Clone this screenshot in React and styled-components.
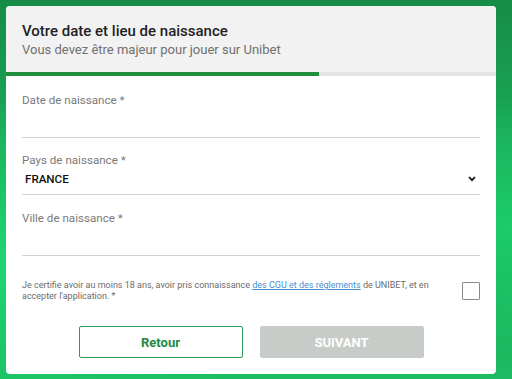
import styled, { createGlobalStyle } from 'styled-components'

const GlobalStyle = createGlobalStyle`
  html, body {
    margin: 0;
    padding: 0;
  }
  body {
    width: 512px;
    height: 379px;
    overflow: hidden;
    font-family: Roboto, "Liberation Sans", sans-serif;
    background:
      radial-gradient(ellipse at 0% 70%, #1fd672 0%, rgba(31, 214, 114, 0) 45%),
      radial-gradient(ellipse at 100% 60%, #1ccb6b 0%, rgba(28, 203, 107, 0) 40%),
      linear-gradient(180deg, #168c47 0%, #1aa857 35%, #1cbb62 100%);
  }
`

const Page = styled.div`
  padding: 6px 16px 0 6px;
`

const Card = styled.div`
  width: 490px;
  height: 368px;
  background: #ffffff;
  border-radius: 4px;
  overflow: hidden;
  display: flex;
  flex-direction: column;
`

const Header = styled.div`
  height: 66px;
  box-sizing: border-box;
  background: #f2f2f2;
  padding: 16px 16px 0 16px;
`

const Title = styled.div`
  font-size: 15px;
  font-weight: 500;
  line-height: 19px;
  color: #222222;
`

const Subtitle = styled.div`
  font-size: 13px;
  line-height: 16px;
  color: #707070;
  margin-top: 1px;
`

const Progress = styled.div`
  height: 4px;
  background: #e4e4e4;
`

const ProgressFill = styled.div`
  height: 100%;
  background: #1e8f3c;
`

const Body = styled.div`
  padding: 0 16px;
  display: flex;
  flex-direction: column;
`

const Field = styled.div`
  padding-top: ${({ $top }) => $top}px;
  border-bottom: 1px solid #cfd3d7;
`

const Label = styled.div`
  font-size: 11.6px;
  line-height: 14px;
  color: #7a7a7a;
`

const EmptyInput = styled.div`
  height: 30px;
`

const SelectRow = styled.div`
  display: flex;
  align-items: center;
  justify-content: space-between;
  height: 16px;
  margin-top: 4px;
  padding: 0 4px 7px 3px;
`

const SelectValue = styled.span`
  font-size: 11.6px;
  font-weight: 500;
  color: #111111;
`

const Legal = styled.div`
  display: flex;
  align-items: flex-start;
  justify-content: space-between;
  margin-top: 24px;
`

const LegalText = styled.p`
  margin: 0;
  width: 420px;
  font-size: 9px;
  line-height: 11px;
  color: #6b6b6b;

  a {
    color: #4a8fd4;
    text-decoration: underline;
  }
`

const Checkbox = styled.span`
  width: 16px;
  height: 16px;
  margin-top: 2px;
  border: 1px solid #8a8a8a;
  border-radius: 1px;
  background: #fff;
`

const Actions = styled.div`
  display: flex;
  justify-content: center;
  gap: 17px;
  margin-top: 24px;
`

const Button = styled.button`
  width: 164px;
  height: 32px;
  box-sizing: border-box;
  border-radius: 2px;
  font-family: Roboto, "Liberation Sans", sans-serif;
  font-size: 13px;
  font-weight: 700;
  cursor: pointer;
  border: 1px solid ${({ $primary }) => ($primary ? '#c8ccc9' : '#2e9a55')};
  background: ${({ $primary }) => ($primary ? '#c8ccc9' : '#ffffff')};
  color: ${({ $primary }) => ($primary ? '#ffffff' : '#1f8a45')};
`

const Chevron = () => (
  <svg width="8" height="6" viewBox="0 0 8 6">
    <path d="M1 1 L4 4.2 L7 1" fill="none" stroke="#111" strokeWidth="1.8" />
  </svg>
)

export default function App() {
  return (
    <>
      <GlobalStyle />
      <Page>
        <Card>
          <Header>
            <Title>Votre date et lieu de naissance</Title>
            <Subtitle>Vous devez être majeur pour jouer sur Unibet</Subtitle>
          </Header>
          <Progress>
            <ProgressFill style={{ width: `${(313 / 490) * 100}%` }} />
          </Progress>
          <Body>
            <Field $top={17}>
              <Label>Date de naissance *</Label>
              <EmptyInput />
            </Field>
            <Field $top={15}>
              <Label>Pays de naissance *</Label>
              <SelectRow>
                <SelectValue>FRANCE</SelectValue>
                <Chevron />
              </SelectRow>
            </Field>
            <Field $top={16}>
              <Label>Ville de naissance *</Label>
              <EmptyInput />
            </Field>
            <Legal>
              <LegalText>
                Je certifie avoir au moins 18 ans, avoir pris connaissance{' '}
                <a href="#cgu">des CGU et des réglements</a> de UNIBET, et en
                accepter l'application. *
              </LegalText>
              <Checkbox />
            </Legal>
            <Actions>
              <Button>Retour</Button>
              <Button $primary>SUIVANT</Button>
            </Actions>
          </Body>
        </Card>
      </Page>
    </>
  )
}
